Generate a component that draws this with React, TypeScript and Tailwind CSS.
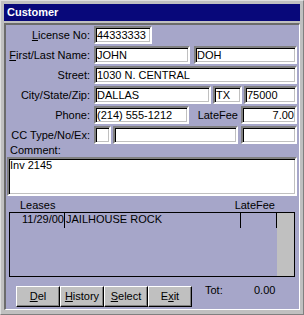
import type { ReactNode } from 'react'

const sunken =
  'h-[18px] bg-white border-2 border-t-[#808080] border-l-[#808080] border-r-white border-b-white shadow-[inset_1px_1px_0_#000,inset_-1px_-1px_0_#c0c0c0] px-[1px] leading-[14px] whitespace-nowrap overflow-hidden'

function Field({ className, value, right }: { className: string; value?: string; right?: boolean }) {
  return <div className={`${sunken} ${className} ${right ? 'text-right' : ''}`}>{value}</div>
}

function Label({ children }: { children: ReactNode }) {
  return <div className="w-[84px] shrink-0 text-right leading-[18px] mr-[4px] whitespace-nowrap">{children}</div>
}

function Btn({ children }: { children: ReactNode }) {
  return (
    <button className="w-[44px] h-[21px] bg-[#c0c0c0] border border-t-white border-l-white border-r-black border-b-black shadow-[inset_-1px_-1px_0_#808080] leading-[13px] text-black">
      {children}
    </button>
  )
}

export default function App() {
  return (
    <div className="w-[304px] h-[315px] bg-[#c0c0c0] border border-t-[#dfdfdf] border-l-[#dfdfdf] border-r-[#808080] border-b-[#808080] p-[3px] pb-[4px] flex flex-col font-['Liberation_Sans',Arial,sans-serif] text-[11px] text-black">
      <div className="h-[17px] bg-[#08087a] text-white font-bold leading-[17px] pl-[3px]">Customer</div>
      <div className="mt-[2px] flex-1 border-t-2 border-l-2 border-r border-b border-t-[#6b6b6b] border-l-[#6b6b6b] border-r-white border-b-white bg-[#a6a6c9] pt-[1px] flex flex-col">
        <div className="flex flex-col gap-[2px]">
          <div className="flex h-[18px]">
            <Label>
              <span className="underline">L</span>icense No:
            </Label>
            <Field className="w-[58px]" value="44333333" />
          </div>
          <div className="flex h-[18px]">
            <Label>
              <span className="underline">F</span>irst/Last Name:
            </Label>
            <Field className="w-[96px]" value="JOHN" />
            <Field className="w-[103px] ml-[4px]" value="DOH" />
          </div>
          <div className="flex h-[18px]">
            <Label>Street:</Label>
            <Field className="w-[203px]" value="1030 N. CENTRAL" />
          </div>
          <div className="flex h-[18px]">
            <Label>City/State/Zip:</Label>
            <Field className="w-[117px]" value="DALLAS" />
            <Field className="w-[29px] ml-[2px]" value="TX" />
            <Field className="w-[53px] ml-[2px]" value="75000" />
          </div>
          <div className="flex h-[18px]">
            <Label>Phone:</Label>
            <Field className="w-[95px]" value="(214) 555-1212" />
            <div className="w-[52px] text-right pr-[3px] leading-[18px]">LateFee</div>
            <Field className="w-[56px]" value="7.00" right />
          </div>
          <div className="flex h-[18px]">
            <Label>CC Type/No/Ex:</Label>
            <Field className="w-[17px]" />
            <Field className="w-[125px] ml-[2px]" />
            <Field className="w-[56px] ml-[3px]" />
          </div>
        </div>
        <div className="h-[13px] leading-[13px] pl-[4px]">Comment:</div>
        <div className="ml-[1px] w-[290px] h-[39px] bg-white border-2 border-t-[#808080] border-l-[#808080] border-r-white border-b-white shadow-[inset_1px_1px_0_#000,inset_-1px_-1px_0_#c0c0c0] px-[1px] leading-[13px]">
          Inv 2145
        </div>
        <div className="h-[16px] flex items-end leading-[13px]">
          <span className="ml-[14px]">Leases</span>
          <span className="ml-auto mr-[24px]">LateFee</span>
        </div>
        <div className="ml-[3px] w-[286px] h-[65px] border border-black flex">
          <div className="flex-1">
            <div className="flex h-[15px] leading-[13px]">
              <div className="w-[54px] text-right">11/29/00</div>
              <div className="w-[176px] border-l border-black pl-[1px] whitespace-nowrap">JAILHOUSE ROCK</div>
              <div className="w-[37px] border-l border-r border-black"></div>
            </div>
          </div>
          <div className="w-[17px] bg-[#c0c0c0]"></div>
        </div>
        <div className="mt-[9px] ml-[10px] flex items-start">
          <Btn>
            <span className="underline">D</span>el
          </Btn>
          <Btn>
            <span className="underline">H</span>istory
          </Btn>
          <Btn>
            <span className="underline">S</span>elect
          </Btn>
          <Btn>
            E<span className="underline">x</span>it
          </Btn>
          <div className="ml-[13px] -mt-[2px] flex leading-[13px]">
            <span className="w-[49px]">Tot:</span>
            <span>0.00</span>
          </div>
        </div>
      </div>
    </div>
  )
}
